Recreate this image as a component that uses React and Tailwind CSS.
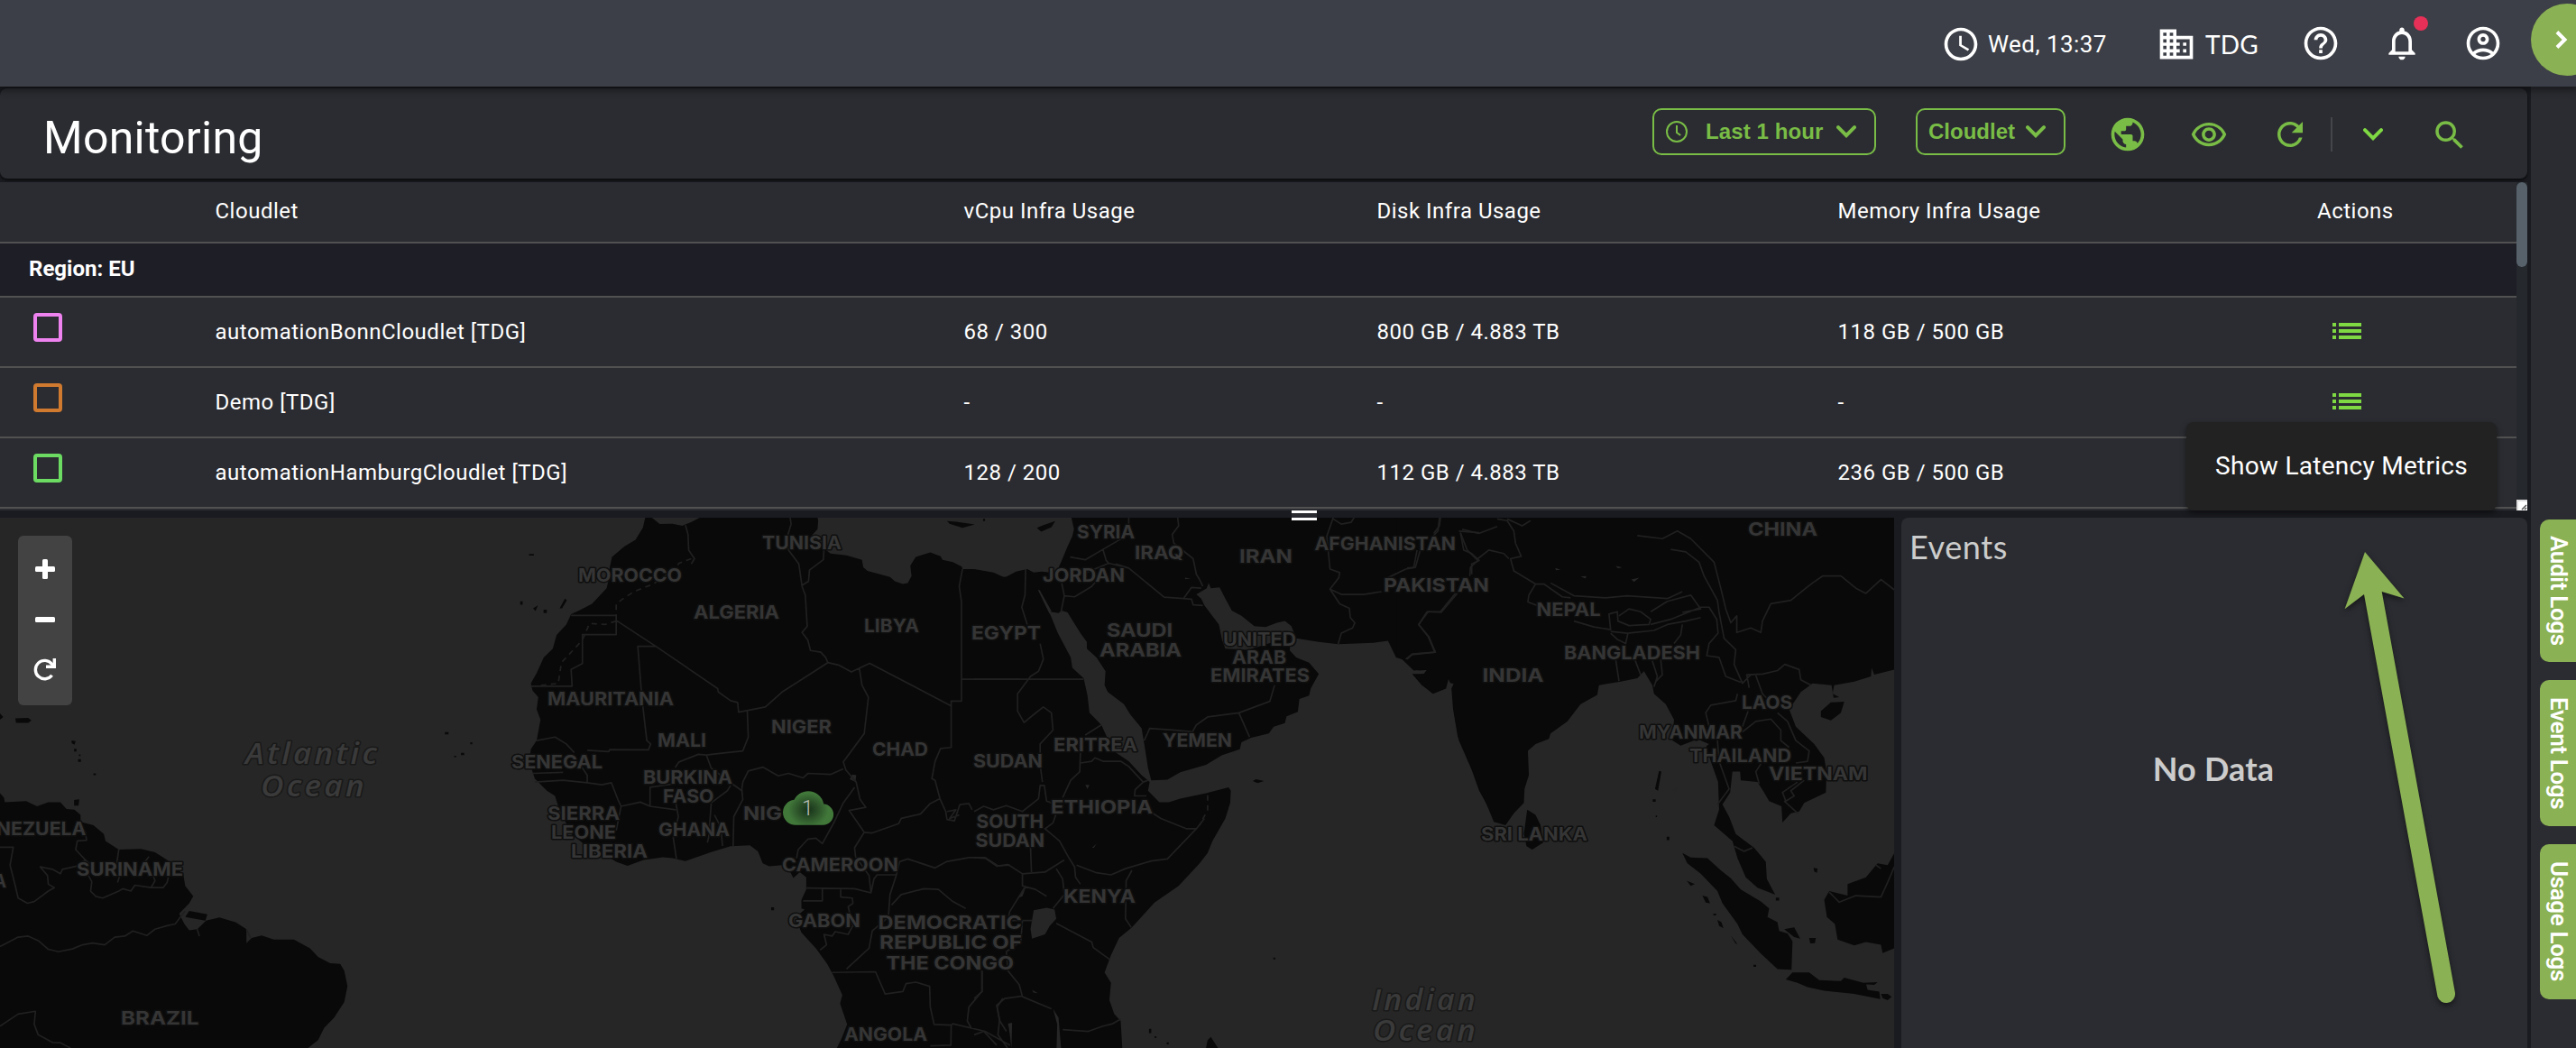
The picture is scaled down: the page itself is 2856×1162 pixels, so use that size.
import React from "react";
import {
  MdAccessTime,
  MdDomain,
  MdHelpOutline,
  MdOutlineNotifications,
  MdOutlineAccountCircle,
  MdPublic,
  MdOutlineRemoveRedEye,
  MdRefresh,
  MdSearch,
} from "react-icons/md";

const rows = [
  { color: "border-[#ee82ee]", name: "automationBonnCloudlet [TDG]", cpu: "68 / 300", disk: "800 GB / 4.883 TB", mem: "118 GB / 500 GB", action: true },
  { color: "border-[#d07a30]", name: "Demo [TDG]", cpu: "-", disk: "-", mem: "-", action: true },
  { color: "border-[#6cdb62]", name: "automationHamburgCloudlet [TDG]", cpu: "128 / 200", disk: "112 GB / 4.883 TB", mem: "236 GB / 500 GB", action: false },
];

const GRID = "grid grid-cols-[238.5px_830px_458px_511px_531.5px_221px] items-center";

function Chevron({ className, width = 22, height = 14, sw = 4 }) {
  return (
    <svg width={width} height={height} viewBox="0 0 22 14" className={className} fill="none" stroke="currentColor" strokeWidth={sw}>
      <path d="M2 2.2 11 11.2 20 2.2" strokeLinecap="round" strokeLinejoin="miter" />
    </svg>
  );
}

function Header() {
  return (
    <header className="relative z-20 flex h-24 shrink-0 items-center justify-end bg-[#3c3f47] pr-[81px] pt-[2px] text-white shadow-[0_2px_8px_2px_rgba(0,0,0,0.45)]">
      <MdAccessTime className="size-[44px]" />
      <span className="ml-[8px] w-[133px] whitespace-nowrap font-[Roboto] text-[26px] leading-none tracking-[0.45px]">Wed, 13:37</span>
      <MdDomain className="ml-[54px] size-[44px]" />
      <span className="ml-[10px] w-[59px] whitespace-nowrap font-[Lato] text-[28px] leading-none tracking-[0.2px]">TDG</span>
      <MdHelpOutline className="-mt-[3px] ml-[47px] size-[44px]" />
      <div className="relative -mt-[3px] ml-[46px] size-[44px]">
        <MdOutlineNotifications className="size-[44px]" />
        <span className="absolute left-[35px] top-[-8px] size-[16px] rounded-full bg-[#e63057]" />
      </div>
      <MdOutlineAccountCircle className="-mt-[3px] ml-[46px] size-[44px]" />
      <div className="absolute right-0 top-[4px] h-[80px] w-[50px] overflow-hidden">
        <div className="flex size-[80px] items-center rounded-full bg-[#8ab153] pl-[26px]">
          <svg width="16" height="24" viewBox="0 0 16 24" fill="none" stroke="#fff" strokeWidth="4">
            <path d="M3 3.5 11.5 12 3 20.5" />
          </svg>
        </div>
      </div>
    </header>
  );
}

function Toolbar() {
  return (
    <section className="flex h-[100px] shrink-0 items-start rounded-[8px] bg-[#2b2c31] shadow-[0_2px_3px_rgba(0,0,0,0.6)]">
      <h1 className="ml-[48px] mt-[30px] w-[1784px] font-[Roboto] text-[50px] font-normal leading-[50px] tracking-[0.25px] text-white">Monitoring</h1>
      <div className="mt-[22px] flex h-[52px] w-[248px] items-center rounded-[10px] border-2 border-[#79bd46] pl-[13px] text-[#79bd46]">
        <svg width="24" height="24" viewBox="0 0 24 24" fill="none" stroke="currentColor" strokeWidth="2">
          <circle cx="12" cy="12" r="11" />
          <path d="M12 5v8l4.2 3" />
        </svg>
        <span className="ml-[20px] whitespace-nowrap font-['Liberation_Sans'] text-[24px] font-bold leading-none tracking-[0.1px]">Last 1 hour</span>
        <Chevron className="ml-[15px]" />
      </div>
      <div className="ml-[44px] mt-[22px] flex h-[52px] w-[166px] items-center rounded-[10px] border-2 border-[#79bd46] pl-[12px] text-[#79bd46]">
        <span className="whitespace-nowrap font-['Liberation_Sans'] text-[24px] font-bold leading-none">Cloudlet</span>
        <Chevron className="ml-[12px]" />
      </div>
      <div className="ml-[47px] mt-[29px] flex h-[44px] items-center text-[#79bd46]">
        <MdPublic className="size-[44px]" />
        <MdOutlineRemoveRedEye className="ml-[47px] size-[42px]" />
        <MdRefresh className="ml-[48px] size-[42px]" />
        <div className="ml-[24px] h-[38px] w-[2px] bg-[#45464b]" />
        <Chevron className="ml-[34px] text-[#7fd943]" sw={4} />
        <MdSearch className="ml-[53px] mt-[2px] size-[42px]" />
      </div>
    </section>
  );
}

function Table() {
  return (
    <section className="relative mt-[4px] flex h-[364px] shrink-0 bg-[#2b2c31] font-[Roboto] text-[24px] leading-none tracking-[0.5px] text-white">
      <div className="w-[2790px] overflow-hidden">
        <div className={`${GRID} h-[68px] border-b-2 border-[#515151] pb-[2px]`}>
          <span className="col-start-2">Cloudlet</span>
          <span>vCpu Infra Usage</span>
          <span>Disk Infra Usage</span>
          <span>Memory Infra Usage</span>
          <span>Actions</span>
        </div>
        <div className="flex h-[60px] items-center border-b-2 border-[#515151] bg-[#1e1e26] pb-[3px] pl-[32px] font-bold tracking-normal">Region: EU</div>
        {rows.map((r) => (
          <div key={r.name} className={`${GRID} h-[78px] border-b-2 border-[#515151]`}>
            <span className={`-mt-[11px] ml-[37px] size-[32px] rounded-[4px] border-4 ${r.color}`} />
            <span>{r.name}</span>
            <span>{r.cpu}</span>
            <span>{r.disk}</span>
            <span>{r.mem}</span>
            {r.action && (
              <svg width="34" height="20" viewBox="0 0 34 20" className="-mt-[2px] ml-[16px] text-[#7fd943]" fill="currentColor">
                <path d="M1 1h4v4H1zM1 8h4v4H1zM1 15h4v4H1zM8 1h25v4H8zM8 8h25v4H8zM8 15h25v4H8z" />
              </svg>
            )}
          </div>
        ))}
      </div>
      <div className="flex w-[12px] flex-col justify-between bg-[#25282d]">
        <div className="h-[94px] rounded-full bg-[#56616a]" />
        <svg width="12" height="12" viewBox="0 0 12 12" className="bg-white">
          <path d="M0 0h12v2H2v10H0z" fill="#ddd" />
          <path d="M6 11 11 6M9 11l2-2" stroke="#555" strokeWidth="1.5" />
        </svg>
      </div>
      <div className="absolute left-[2424px] top-[266px] z-10 flex h-[98px] w-[344px] items-center justify-center rounded-[8px] bg-[#222222] text-[28px] tracking-[0.27px] shadow-[0_3px_6px_rgba(0,0,0,0.5)]">
        Show Latency Metrics
      </div>
    </section>
  );
}

// [text, left, right, baseline]
const labels = [
  ["TUNISIA", 845, 933, 609], ["MOROCCO", 641, 756, 645], ["ALGERIA", 769, 864, 686], ["LIBYA", 958, 1019, 700.5],
  ["MAURITANIA", 607, 747, 782], ["MALI", 729, 783, 828], ["NIGER", 855, 922, 813], ["CHAD", 967, 1029, 838],
  ["SENEGAL", 567, 668, 852], ["BURKINA", 713, 812, 869], ["FASO", 735, 791.5, 889.5], ["SIERRA", 607, 687, 909],
  ["LEONE", 611, 683, 930], ["LIBERIA", 633, 718, 951], ["GHANA", 730, 809, 927], ["NIG", 824, 867, 909],
  ["CAMEROON", 867, 996, 965.5], ["GABON", 874, 954, 1028], ["DEMOCRATIC", 973.6, 1133, 1029.5], ["REPUBLIC OF", 975, 1133, 1052],
  ["THE CONGO", 982.5, 1124, 1075], ["ANGOLA", 936, 1028, 1154], ["EGYPT", 1077, 1154, 708.5], ["SYRIA", 1194, 1258, 597],
  ["IRAQ", 1258, 1312, 620], ["JORDAN", 1156, 1247, 644.5], ["IRAN", 1374, 1433, 624], ["AFGHANISTAN", 1457.5, 1614, 609.5],
  ["PAKISTAN", 1534, 1651, 656], ["SAUDI", 1227, 1300, 705.5], ["ARABIA", 1219, 1310, 728], ["UNITED", 1356, 1437, 715.5],
  ["ARAB", 1366, 1426, 736], ["EMIRATES", 1342, 1452, 756], ["ERITREA", 1168, 1261, 832.5], ["YEMEN", 1289, 1366, 828],
  ["SUDAN", 1079, 1156, 850.5], ["ETHIOPIA", 1165, 1278, 901.5], ["SOUTH", 1082.5, 1157, 918], ["SUDAN", 1081.5, 1158, 939],
  ["KENYA", 1179, 1259, 1001], ["CHINA", 1938, 2015, 593.5], ["NEPAL", 1703.5, 1774.5, 683], ["BANGLADESH", 1734, 1885, 731],
  ["INDIA", 1643.5, 1711.5, 756], ["LAOS", 1931, 1987, 785.5], ["MYANMAR", 1817, 1932, 818.5], ["THAILAND", 1873, 1986, 845],
  ["VIETNAM", 1961, 2070.5, 864.5], ["SRI LANKA", 1642, 1760, 932], ["VENEZUELA", -33, 95.5, 925.5], ["A", -7, 7, 984],
  ["SURINAME", 85, 203, 970.5], ["BRAZIL", 134, 220.5, 1135.5],
];

const oceans = [
  ["Atlantic", 272, 418, 847], ["Ocean", 289, 404, 882.5], ["Indian", 1521, 1636, 1119.5], ["Ocean", 1522, 1636, 1154],
];

const regions = [
  {
    name: "south-america",
    transform: "matrix(0.4464 0 0 0.3839 0 560)",
    land: "M0 832 10 845 12 858 65 855 92 870 120 858 150 858 165 878 185 880 200 895 200 915 232 925 258 950 262 970 295 995 350 993 385 1003 415 1025 430 1045 455 1065 460 1100 480 1130 470 1150 445 1180 458 1210 470 1228 490 1225 512 1200 545 1191 585 1205 612 1225 612 1265 625 1250 650 1243 680 1255 730 1255 770 1280 790 1305 820 1323 845 1325 855 1345 863 1390 855 1435 830 1480 805 1510 790 1545 765 1568 0 1568ZM470 1172 515 1182 510 1200 460 1190ZM184 852 197 850 195 868 184 868ZM38 616 70 615 78 622 70 629 40 629ZM0 602 8 612 0 620ZM1314 141h12v5h-12zM1292 278h6v10h-6zM1324 298 1336 290 1330 306ZM1350 302h8v10h-8zM1390 298 1403 270 1408 275 1396 298ZM1105 656h9v6h-9zM1145 716h8v6h-8zM1168 685h5v6h-5zM1128 724h5v4h-5zM178 680 188 682 185 692 178 688ZM184 704h6v8h-6zM194 734h7v8h-7zM232 775h6v5h-6zM196 720h4v5h-4z",
    water: "M78 856 92 868 110 858Z",
    border: "M0 988 33 988 25 1040 38 1100 45 1135 68 1150 85 1145 120 1115 135 1105 120 1095 118 1070 100 1045 130 1052 150 1065 155 1052 190 1043 212 1025 188 995 192 970 215 968 212 945 195 915M212 1025 222 1035 215 1060 228 1088 225 1115 238 1130 255 1135 295 1115 305 1108 325 1115 335 1098 375 1105 405 1105 415 1090 418 1075M295 995 290 1035 300 1060 292 1090M370 1015 350 1045 375 1055 385 1085 375 1105M0 1275 25 1260 45 1248 70 1245 95 1258 120 1283 145 1290 180 1282 205 1270 230 1265 260 1270 285 1248 310 1245 330 1230 365 1243 385 1225 415 1215 435 1210 460 1172M0 1505 45 1470 88 1462 85 1500 95 1530 130 1552 150 1553 175 1568M490 1225 495 1245M612 1225 622 1250",
  },
  {
    name: "west-africa",
    transform: "matrix(0.3571 0 0 0.3839 560 560)",
    land: "M435 36 428 65 405 100 370 120 332 150 325 180 322 215 315 240 270 285 235 302 205 315 190 345 160 375 148 415 120 440 98 485 80 515 85 535 103 555 98 590 110 620 98 680 80 705 75 740 92 790 130 825 155 840 165 870 205 950 260 990 310 1010 345 1030 380 1042 430 1025 490 1017 520 1020 560 1028 610 1012 640 1002 700 985 760 983 785 1000 800 1035 820 1043 860 1040 880 1050 895 1077 915 1060 935 1075 935 1110 920 1140 920 1165 930 1168 915 1180 905 1200 920 1235 965 1280 1000 1325 1020 1360 1047 1415 1040 1440 1062 1500 1045 1540 1030 1568 1600 1568 1600 205 1545 208 1500 195 1450 185 1420 185 1418 178 1390 165 1358 158 1352 148 1320 137 1275 150 1258 175 1262 205 1250 225 1235 228 1210 220 1195 208 1125 190 1112 180 1108 158 1060 145 1010 140 990 125 945 95 970 70 972 45 970 36 605 36 580 48 550 60 520 54 480 55 455 36ZM1372 46 1400 48 1458 56 1420 66 1380 54ZM826 1162h9v8h-9zM1484 40h6v6h-6z",
    water: "M1078 778 1090 780 1088 800 1070 792Z",
    border: "M560 58 568 85 570 130 588 155 578 170M205 319H345V374H240V458L205 475 208 523H80M345 333 468 408 660 530 662 540 700 565 722 570 725 598 808 583 860 540 1002 455 995 440 980 425 948 420 940 390 922 368 938 350 932 260 922 235 912 170 880 130 875 95 888 55 885 36M922 232 942 220 945 188 988 158 990 130M468 408H412L425 560 440 680 452 690 445 707 325 706 322 712 255 708M752 596 755 670 738 710 660 718 625 722 600 720 540 742 528 758M1002 455 1035 462 1075 482 1132 457 1385 580V700L1352 703 1335 740 1325 790 1335 795 1350 848 1368 885 1372 908 1395 912 1412 865 1440 862 1450 880M1420 185 1410 235 1417 280V566H1385V580M1417 503H1600M1100 472 1108 520 1128 555 1115 660 1050 742 1058 765 1090 800 1102 850 1120 873 1068 882 1115 945 1140 947 1222 920 1230 905 1290 892 1320 862 1350 848M1115 945 1085 990 1088 1015 1130 1070 1136 1120 1085 1108 935 1106M985 1106V1143H925M1042 1108 1042 1132 1078 1135 1080 1150 1065 1160 1080 1215 1065 1240 1025 1232 1015 1245 990 1240 998 1270 978 1285M735 820 738 800 755 768 800 757 848 782 880 775 925 788 940 775 1010 778 1050 762M735 820 738 850 710 900 708 985M1085 815 1050 860 1022 915 985 978 965 962 940 965 910 995 905 1020M98 680 155 670 190 690 215 715M85 775 180 772M92 800 180 795 255 802 300 808 330 802 350 850 360 870 420 858 450 870 450 815 525 805 530 770M255 802 255 780 230 745M360 870 345 940M625 722 640 760 705 805 735 825M640 860 690 825 700 810M530 860 538 900 522 960 532 1022M640 862 632 960 628 975M650 895 670 930 675 985M450 870 530 880M1136 1120 1145 1080 1155 1068 1215 1068 1195 1125 1190 1190 1140 1230 1130 1280 1060 1340M1215 1068 1225 1030 1250 1022 1335 1048 1370 1030 1440 1018 1490 1018 1530 1042 1568 1040M1015 1350 1150 1348 1180 1412 1235 1405 1245 1382 1275 1378 1318 1390 1320 1450 1332 1500 1385 1502 1390 1498 1490 1520 1568 1560M1385 1502 1384 1560 1320 1562M1200 1155 1230 1125 1300 1108 1345 1110 1390 1145 1430 1165M1480 1345 1480 1405 1440 1450 1435 1490 1448 1512M1545 1425 1528 1450 1535 1490 1530 1530 1560 1568M1372 885 1400 880 1380 905 1410 895",
    dashed: "M578 155 540 168 520 190 460 228 400 250 370 268 345 285V319M345 335 310 345 262 342 240 390 175 455 165 515 90 523",
  },
  {
    name: "east-africa-and-arabia",
    transform: "matrix(0.3571 0 0 0.3839 1080 560)",
    land: "M-40 200 0 185 60 195 95 210 130 192 165 185 185 195 210 192 235 195 255 195 270 165 290 120 305 90 310 70 302 36 1600 36 1600 878 1568 825 1545 765 1505 680 1490 600 1485 530 1492 515 1480 515 1475 495 1465 530 1425 545 1390 520 1360 488 1400 488 1410 476 1380 478 1345 450 1310 440 1285 392 1240 398 1130 402 1070 395 1000 385 985 350 965 335 940 340 905 352 870 350 830 320 800 305 780 270 762 238 735 240 728 225 722 240 690 258 705 270 715 290 760 345 770 390 780 415 850 418 930 395 960 375 985 365 980 420 1000 440 1040 455 1070 488 1045 530 1040 550 1010 560 1005 597 970 610 965 630 930 640 915 660 860 672 830 685 825 705 770 722 720 750 640 772 600 793 550 795 540 760 530 700 520 645 485 605 465 575 415 540 405 520 408 480 380 440 350 415 350 395 330 370 290 310 272 305 262 312 235 308 200 242 238 320 260 370 300 440 305 470 340 500 352 550 358 600 395 635 415 675 440 715 480 740 520 780 545 800 540 825 575 858 605 858 640 848 720 832 790 815 797 825 795 860 780 905 740 970 725 1005 700 1035 635 1100 560 1148 490 1220 450 1250 425 1300 405 1350 425 1380 420 1430 435 1470 455 1490 460 1568 -40 1568ZM720 1568 725 1545 735 1536 757 1568ZM865 797 875 792 900 797 880 803ZM195 66 215 58 252 46 240 64 208 77ZM929 1307h6v5h-6zM543 1513h7v12h-7zM560 1534h6v5h-6zM598 1552h6v6h-6z",
    water: "M185 1170 225 1163 250 1168 255 1195 235 1215 220 1240 180 1252 175 1225ZM345 808 358 808 352 820ZM245 1455 262 1480 270 1568 256 1568 258 1500ZM180 1400 198 1410 184 1408ZM105 1498 118 1495 116 1568 108 1510ZM366 990 380 978 372 990ZM655 210 672 212 655 214ZM135 1136 160 1105 150 1130ZM198 245 204 246 240 306 234 314Z",
    border: "M270 308 280 262 272 225M280 262 312 265 365 235 388 210M298 150 345 158 400 128 480 85 480 36M400 128 410 160 418 168 480 182 590 266 650 270 675 238 705 240M650 270 675 272 680 288 710 290M418 168 335 200M480 182 440 170M632 36 635 60 615 85 620 110 680 155 690 200 700 215 710 235M1115 36 1095 90 1105 185 1135 195 1132 210 1105 243 1140 258 1210 258 1265 250M1105 243 1135 285 1165 298 1168 325 1182 340 1175 355 1140 370 1130 402M1115 40 1140 55 1170 50 1180 36M1445 36 1440 75 1420 95M1385 130 1370 180 1340 185 1280 212M1500 255 1450 310 1410 308 1380 345 1410 380 1430 425 1360 430 1340 445M1505 75 1568 80M1510 80 1520 130 1545 140 1568 160 1545 170 1545 200M933 520 918 567 822 600 855 670M822 600 725 612 690 635 678 655 625 650 545 645 538 660 528 680M345 664 395 635M330 715 328 770 300 795 275 845M330 745 365 740 375 730 400 740 455 740 480 755 525 800 540 795M525 800 500 822 498 840 535 840M555 890 580 905 660 935 690 935 600 1022 550 1028 470 1050 425 1068 380 1062 318 1040M490 1055 472 1085 470 1195 488 1220M690 935 715 905M0 503H340M0 885 30 870 60 880 100 868 150 885 200 848 205 810 218 810 225 855 240 860M240 860 255 890 245 918 220 935 265 970 295 1020M0 1018 35 1020 70 1043 105 1038 150 1065 220 1060 280 1025M150 1065 150 1100 190 1110 225 1130M295 1020 312 1045 315 1075 330 1095M255 1050 275 1080 280 1125 245 1165M160 1100 110 1175 105 1200 180 1200M255 1208 365 1262 370 1278 420 1312M105 1345 140 1385 150 1420 240 1455M150 1418 95 1425 70 1445 80 1490 100 1520M275 1515 355 1520 400 1505 430 1498 455 1485M160 185 158 260 148 295 165 345M205 400 215 445 200 480 175 495 135 545 135 595 155 628 185 605 215 583 240 600 245 650 205 690 205 750 212 800M25 1345 25 1405 0 1425M150 1200 145 1260 100 1290 105 1345M175 985 178 1060M0 1530 30 1520 70 1560",
    dashed: "M725 838V880L700 925",
  },
  {
    name: "south-east-asia",
    transform: "matrix(0.37 0 0 0.3839 1560 560)",
    land: "M-30 36H1460V475L1400 490 1392 470 1390 495 1340 510 1280 520 1275 545 1295 555 1278 557 1272 520 1215 515 1180 540 1145 590 1165 640 1220 690 1250 730 1257 770 1255 830 1190 860 1175 885 1150 890 1125 917 1122 870 1085 855 1070 830 1050 800 1000 795 998 770 975 770 968 830 945 865 965 900 985 950 1040 990 1075 1030 1078 1080 1103 1125 1050 1105 1015 1075 990 1020 975 970 920 925 935 880 932 800 910 740 895 690 860 680 820 695 795 680 800 620 775 575 740 545 735 520 710 480 690 500 640 510 575 520 570 548 520 575 480 625 430 660 425 675 385 690 362 710 365 780 352 820 350 860 320 890 295 925 260 915 245 880 205 790 180 720 152 670 138 590 133 530 140 515 128 512 122 496 112 530 75 543 20 492 50 488 60 475 20 478-10 450-30 430ZM360 880 385 895 400 925 408 975 375 995 358 985 350 950ZM1240 595 1270 570 1310 568 1300 600 1270 622 1240 612ZM825 1005 850 1018 900 1020 940 1055 970 1078 1000 1110 1060 1145 1085 1165 1080 1190 1110 1205 1115 1230 1140 1237 1155 1260 1152 1342 1110 1340 1060 1295 1005 1240 990 1210 945 1150 930 1115 880 1065 840 1035ZM1135 1370 1155 1350 1205 1350 1235 1372 1300 1375 1310 1365 1375 1382 1380 1400 1415 1405 1418 1427 1340 1412 1250 1403 1200 1392 1170 1380ZM1250 1140 1265 1115 1320 1128 1320 1095 1375 1075 1410 1035 1440 1040 1460 1005V1280L1425 1294 1420 1270 1375 1262 1340 1272 1290 1255 1282 1210 1258 1190ZM838 1085 862 1095 850 1100ZM885 1128 900 1132 908 1150 895 1148ZM930 1198 942 1205 948 1222 935 1215ZM970 1243 990 1268 984 1266ZM1130 1225 1160 1220 1178 1252 1160 1248ZM1205 1250 1225 1250 1222 1265 1208 1266ZM1365 1380 1410 1378 1400 1386 1370 1384ZM1420 1412 1440 1412 1452 1420 1440 1430 1425 1424ZM755 768 762 770 752 825 743 820ZM736 850h9v7h-9zM778 958h8v10h-8zM1218 1048 1230 1050 1228 1062 1220 1058ZM1105 1134h10v8h-10zM918 1180h8v5h-8zM1038 1328h8v6h-8zM745 897h4v4h-4z",
    water: "M845 695 875 678 905 690 880 708ZM444 182 460 187 446 188ZM520 206 538 205 534 212ZM672 215 696 210 680 222ZM625 176 645 180 632 183ZM788 828 812 815 800 832Z",
    border: "M100 36 97 60 80 82M30 130 20 180 0 182M270 40 300 45 320 75 325 110 342 148 310 155 320 190 385 228 365 260 362 280 390 290M300 40 345 60 370 45M160 80 180 130 212 160 190 180 188 205M270 62 215 82 165 70M212 155 245 130 290 140 305 155M385 228 410 228 465 265 490 268M430 225 500 262 595 268 660 262 780 270 825 250M500 335 560 352 610 360 605 315 630 308 632 335 665 348 725 345 730 330 700 308 665 300 635 320M730 308 780 278 850 260 880 300 825 310M730 345 790 330 880 295 905 295 928 330 932 370 905 400 898 435 935 440 955 495 1000 512M610 365 660 370 740 362 780 345 835 335 880 325M610 370 630 388 655 400 662 370M825 345 820 375 800 400M625 445 635 508M680 440 700 490M735 450 750 495 740 525M760 445 765 490 745 510M690 88 765 97 810 75 850 97 920 165 940 240 955 300 970 340 988 320 988 368 1030 355 1060 368 1065 335 1090 285 1150 275 1195 240 1215 225 1245 205H1300L1345 240 1375 255 1420 215 1460 245M790 128 835 135 875 165 890 205 930 275 935 310 950 385 985 418 980 460 1005 515 1030 490 1060 488M1025 528 1018 490 1065 488 1110 478 1132 460 1175 475 1180 505 1210 520M1045 492 1065 545 1080 560M990 545 985 565 910 578 895 600 905 640M1005 655 1045 625 1090 618 1120 650 1120 680 1145 700M1110 600 1140 625 1165 680 1205 710 1200 740 1165 745M1060 748 1045 770 1055 805M1190 795 1150 825 1160 840 1135 855 1125 830 1170 800M1130 855 1170 890M930 680 935 740 965 820 930 865M1022 595 1005 640M980 985 1010 1000 1035 990M1265 1118 1295 1147 1345 1128 1420 1132 1440 1090 1460 1045M145 255 100 308 60 308 35 345 65 380 85 425 15 432 0 445M1405 1040 1420 1050",
  },
];

function WorldMap() {
  return (
    <div className="relative w-[2100px] shrink-0 overflow-hidden bg-[#262626]">
      <svg width="2100" height="588" viewBox="0 574 2100 588">
        <defs>
          <radialGradient id="cloudFill" cx="0.5" cy="0.55" r="0.5" gradientTransform="translate(0.1 0) scale(0.8 1)">
            <stop offset="0" stopColor="#17331a" />
            <stop offset="0.5" stopColor="#2c5229" />
            <stop offset="1" stopColor="#41783a" />
          </radialGradient>
        </defs>
        {regions.map((r) => (
          <g key={r.name} transform={r.transform}>
            <path d={r.land} fill="#090909" />
            <path d={r.water} fill="#262626" />
          </g>
        ))}
        {regions.map((r) => (
          <g key={r.name} transform={r.transform} fill="none" stroke="#202020" strokeWidth="1.7" strokeLinejoin="round">
            <path d={r.border} vectorEffect="non-scaling-stroke" />
            {r.dashed && <path d={r.dashed} vectorEffect="non-scaling-stroke" strokeDasharray="6 5" />}
          </g>
        ))}
        <g fill="#353535" stroke="#0f0f0f" strokeWidth="3" paintOrder="stroke" strokeLinejoin="round" fontFamily="Inter, sans-serif" fontWeight="700">
          {labels.map(([t, l, r, y]) => (
            <text key={t + y} x={l} y={y} fontSize="20" textLength={r - l} lengthAdjust="spacingAndGlyphs">{t}</text>
          ))}
        </g>
        <g fill="#3a3a3a" stroke="#191919" strokeWidth="3" paintOrder="stroke" strokeLinejoin="round" fontFamily="'Open Sans', sans-serif" fontStyle="italic" fontWeight="600">
          {oceans.map(([t, l, r, y]) => (
            <text key={t + y} x={l} y={y} fontSize="32" letterSpacing="3" textLength={r - l + 3} lengthAdjust="spacingAndGlyphs">{t}</text>
          ))}
        </g>
        <path transform="translate(868 868) scale(2.34)" fill="url(#cloudFill)" d="M19.35 10.04A7.49 7.49 0 0 0 12 4C9.11 4 6.6 5.64 5.35 8.04A5.994 5.994 0 0 0 0 14c0 3.31 2.69 6 6 6h13c2.76 0 5-2.24 5-5 0-2.64-2.05-4.78-4.65-4.96z" />
        <text x="895.5" y="903.5" textAnchor="middle" fill="#b9bdb9" fontFamily="Roboto, sans-serif" fontSize="23" fontWeight="300">1</text>
      </svg>
      <div className="absolute left-[20px] top-[20px] flex h-[188px] w-[60px] flex-col items-center rounded-[6px] bg-[#434343] pt-[26px]">
        <svg width="22" height="22" viewBox="0 0 22 22" fill="#fff">
          <rect x="0" y="8" width="22" height="6" rx="1.5" />
          <rect x="8" y="0" width="6" height="22" rx="1.5" />
        </svg>
        <svg width="22" height="6" viewBox="0 0 22 6" fill="#fff" className="mt-[42px]">
          <rect width="22" height="6" rx="1.5" />
        </svg>
        <svg width="26" height="26" viewBox="0 0 26 26" fill="none" stroke="#fff" strokeWidth="3.4" className="mt-[39px]">
          <path d="M20.6 19.8A10.2 10.2 0 1 1 20.5 7.2L22.4 9.5" />
          <path d="M23.3 1v9.3H14" />
        </svg>
      </div>
    </div>
  );
}

function Events() {
  return (
    <div className="flex w-[694px] flex-col rounded-t-[8px] bg-[#2b2c31] font-[Lato] leading-none text-[#cccccc]">
      <h2 className="ml-[9px] mt-[14px] text-[36px] font-normal leading-[36px] tracking-[0.6px]">Events</h2>
      <div className="mt-[210px] pr-[2px] text-center text-[36px] font-bold leading-[36px] tracking-[0.2px]">No Data</div>
    </div>
  );
}

function SideTab({ children, size }) {
  return (
    <div className={`flex w-[40px] items-center justify-center rounded-l-[10px] bg-[#8ab153] pl-[2px] ${size}`}>
      <span className="whitespace-nowrap font-[Roboto] text-[26px] font-semibold leading-[38px] tracking-[-0.35px] text-white [writing-mode:vertical-rl]">{children}</span>
    </div>
  );
}

export default function App() {
  return (
    <div className="relative flex h-[1162px] w-[2856px] flex-col overflow-hidden bg-[#1a1b20]">
      <Header />
      <div className="flex min-h-0 flex-1">
        <main className="flex w-[2802px] flex-col pt-[2px]">
          <Toolbar />
          <Table />
          <div className="relative z-10 h-[8px] shrink-0">
            <div className="absolute left-[1432px] top-0 h-[11px] w-[28px] border-y-[3px] border-white bg-[#2b2c31]" />
          </div>
          <div className="flex min-h-0 flex-1 justify-between">
            <WorldMap />
            <Events />
          </div>
        </main>
        <aside className="ml-[4px] flex w-[50px] flex-col items-end gap-[20px] bg-[#2b2c31] pt-[480px]">
          <SideTab size="h-[158px]">Audit Logs</SideTab>
          <SideTab size="h-[162px]">Event Logs</SideTab>
          <SideTab size="h-[172px]">Usage Logs</SideTab>
        </aside>
      </div>
      <svg width="140" height="530" viewBox="2590 600 140 530" className="absolute left-[2590px] top-[600px] z-20 drop-shadow-[0_3px_3px_rgba(0,0,0,0.5)]">
        <path d="M2622 612 2665.5 663.6 2640.7 656 2722 1101A10 10 0 0 1 2702.5 1105L2621 659 2599.6 675.2Z" fill="#8ab153" />
      </svg>
    </div>
  );
}
